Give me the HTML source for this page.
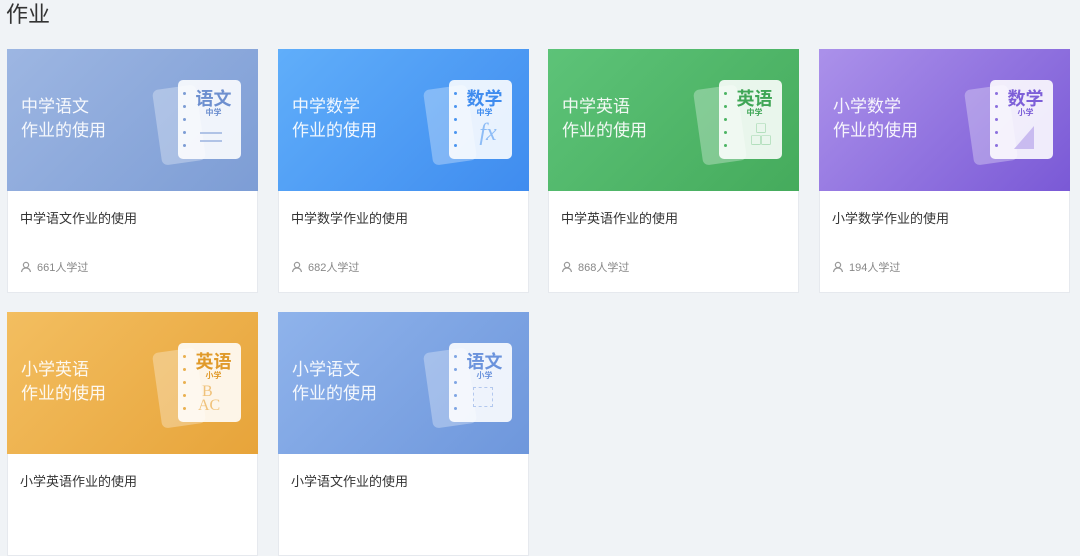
<!DOCTYPE html><html><head><meta charset="utf-8"><style>
*{margin:0;padding:0;box-sizing:border-box}
body{width:1080px;height:497px;background:#f0f3f6;font-family:"Liberation Sans","Noto Sans CJK SC",sans-serif;overflow:hidden;position:relative}
h1{position:absolute;left:6px;top:-3px;font-size:22px;font-weight:400;color:#333}
.card{position:absolute;width:251px;height:244px;background:#fff;border:1px solid #e6e9ee}
.img{position:absolute;left:-1px;top:-1px;width:251px;height:142px;overflow:hidden}
.img .t{position:absolute;left:14px;top:46px;color:#fff;font-size:17px;line-height:24px;opacity:.92}
.back{position:absolute;left:150px;top:38px;width:44px;height:76px;background:rgba(255,255,255,.3);border-radius:6px;transform:rotate(-8deg)}
.front{position:absolute;left:171px;top:31px;width:63px;height:79px;background:rgba(255,255,255,.88);border-radius:5px}
.dots{position:absolute;left:5px;top:12px;width:3px}
.dots i{display:block;width:3px;height:3px;border-radius:50%;margin-bottom:10px}
.big{position:absolute;left:0;right:0;top:5px;text-align:center;font-size:18px;font-weight:700;padding-left:8px}
.sm{position:absolute;left:0;right:0;top:27px;text-align:center;font-size:8px;font-weight:700;padding-left:8px}
.name{position:absolute;left:12px;top:158px;font-size:13px;color:#333}
.cnt{position:absolute;left:12px;top:209px;font-size:11px;color:#888}
.cnt svg{vertical-align:-2px;margin-right:5px}
</style></head><body>
<h1>作业</h1>

<div class="card" style="left:7px;top:49px"><div class="img" style="background:linear-gradient(135deg,#9db6e2,#7d9dd5)"><div class="t">中学语文<br>作业的使用</div><div class="back"></div><div class="front"><div class="dots"><i style="background:#7d9dd5"></i><i style="background:#7d9dd5"></i><i style="background:#7d9dd5"></i><i style="background:#7d9dd5"></i><i style="background:#7d9dd5"></i></div><div class="big" style="color:#6d8fcf">语文</div><div class="sm" style="color:#6d8fcf">中学</div><div style="position:absolute;left:22px;top:52px;width:22px;height:2px;background:#b0c3e6"></div><div style="position:absolute;left:22px;top:60px;width:22px;height:2px;background:#b0c3e6"></div></div></div><div class="name">中学语文作业的使用</div><div class="cnt"><svg width="12" height="12" viewBox="0 0 12 12" fill="none" stroke="#999" stroke-width="1.2"><circle cx="6" cy="4" r="2.6"/><path d="M1.5 11c.5-2.6 2.3-4 4.5-4s4 1.4 4.5 4"/></svg>661人学过</div></div>

<div class="card" style="left:278px;top:49px"><div class="img" style="background:linear-gradient(135deg,#60aefa,#3f8cef)"><div class="t">中学数学<br>作业的使用</div><div class="back"></div><div class="front"><div class="dots"><i style="background:#4a95f0"></i><i style="background:#4a95f0"></i><i style="background:#4a95f0"></i><i style="background:#4a95f0"></i><i style="background:#4a95f0"></i></div><div class="big" style="color:#3f8cef">数学</div><div class="sm" style="color:#3f8cef">中学</div><div style="position:absolute;left:14px;top:40px;width:50px;text-align:center;font:italic 24px 'Liberation Serif',serif;color:#8dbcf6">fx</div></div></div><div class="name">中学数学作业的使用</div><div class="cnt"><svg width="12" height="12" viewBox="0 0 12 12" fill="none" stroke="#999" stroke-width="1.2"><circle cx="6" cy="4" r="2.6"/><path d="M1.5 11c.5-2.6 2.3-4 4.5-4s4 1.4 4.5 4"/></svg>682人学过</div></div>

<div class="card" style="left:548px;top:49px"><div class="img" style="background:linear-gradient(135deg,#5dc378,#45ab5c)"><div class="t">中学英语<br>作业的使用</div><div class="back"></div><div class="front"><div class="dots"><i style="background:#4cb463"></i><i style="background:#4cb463"></i><i style="background:#4cb463"></i><i style="background:#4cb463"></i><i style="background:#4cb463"></i></div><div class="big" style="color:#3fa656">英语</div><div class="sm" style="color:#3fa656">中学</div><div style="position:absolute;left:28px;top:44px;font-size:10px;color:#5dbb72;line-height:12px;text-align:center;width:28px">▢<br>▢▢</div></div></div><div class="name">中学英语作业的使用</div><div class="cnt"><svg width="12" height="12" viewBox="0 0 12 12" fill="none" stroke="#999" stroke-width="1.2"><circle cx="6" cy="4" r="2.6"/><path d="M1.5 11c.5-2.6 2.3-4 4.5-4s4 1.4 4.5 4"/></svg>868人学过</div></div>

<div class="card" style="left:819px;top:49px"><div class="img" style="background:linear-gradient(135deg,#ab91ea,#7a59d6)"><div class="t">小学数学<br>作业的使用</div><div class="back"></div><div class="front"><div class="dots"><i style="background:#8c70de"></i><i style="background:#8c70de"></i><i style="background:#8c70de"></i><i style="background:#8c70de"></i><i style="background:#8c70de"></i></div><div class="big" style="color:#7d5fd8">数学</div><div class="sm" style="color:#7d5fd8">小学</div><svg style="position:absolute;left:22px;top:44px" width="24" height="26"><path d="M2 25L22 2V25Z" fill="#c9bbf0"/></svg></div></div><div class="name">小学数学作业的使用</div><div class="cnt"><svg width="12" height="12" viewBox="0 0 12 12" fill="none" stroke="#999" stroke-width="1.2"><circle cx="6" cy="4" r="2.6"/><path d="M1.5 11c.5-2.6 2.3-4 4.5-4s4 1.4 4.5 4"/></svg>194人学过</div></div>

<div class="card" style="left:7px;top:312px"><div class="img" style="background:linear-gradient(135deg,#f3be60,#e7a43a)"><div class="t">小学英语<br>作业的使用</div><div class="back"></div><div class="front"><div class="dots"><i style="background:#eab050"></i><i style="background:#eab050"></i><i style="background:#eab050"></i><i style="background:#eab050"></i><i style="background:#eab050"></i></div><div class="big" style="color:#e09a2a">英语</div><div class="sm" style="color:#e09a2a">小学</div><div style="position:absolute;left:20px;top:42px;font:16px 'Liberation Serif',serif;color:#f0c27a;line-height:14px">&nbsp;B<br>AC</div></div></div><div class="name">小学英语作业的使用</div></div>

<div class="card" style="left:278px;top:312px"><div class="img" style="background:linear-gradient(135deg,#8fb3eb,#6e97dc)"><div class="t">小学语文<br>作业的使用</div><div class="back"></div><div class="front"><div class="dots"><i style="background:#7fa5e4"></i><i style="background:#7fa5e4"></i><i style="background:#7fa5e4"></i><i style="background:#7fa5e4"></i><i style="background:#7fa5e4"></i></div><div class="big" style="color:#6b93dc">语文</div><div class="sm" style="color:#6b93dc">小学</div><div style="position:absolute;left:24px;top:44px;width:20px;height:20px;border:1px dashed #b3c8ee"></div></div></div><div class="name">小学语文作业的使用</div></div>
</body></html>
